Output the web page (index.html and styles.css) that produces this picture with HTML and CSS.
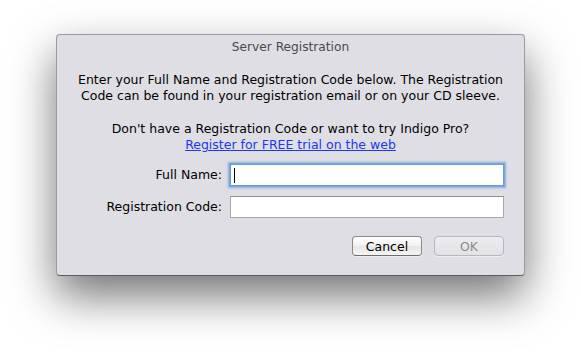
FILE: index.html
```html
<!DOCTYPE html>
<html>
<head>
<meta charset="utf-8">
<title>Server Registration</title>
<link rel="stylesheet" href="styles.css">
</head>
<body>
<div class="stage">
  <div class="sheet">
    <div class="title">Server Registration</div>
    <p class="message">Enter your Full Name and Registration Code below. The Registration Code can be found in your registration email or on your CD sleeve.</p>
    <p class="trial">Don't have a Registration Code or want to try Indigo Pro?<br><a href="#" class="link">Register for FREE trial on the web</a></p>
    <div class="form">
      <label class="label">Full Name:</label>
      <div class="field focused"><span class="caret"></span></div>
      <label class="label">Registration Code:</label>
      <div class="field"></div>
    </div>
    <div class="buttons">
      <button class="btn">Cancel</button>
      <button class="btn disabled">OK</button>
    </div>
  </div>
</div>
</body>
</html>
```

FILE: styles.css
```css
html, body {
  margin: 0;
  padding: 0;
  background: #ffffff;
}
body {
  width: 581px;
  height: 354px;
  overflow: hidden;
  font-family: "DejaVu Sans", "Liberation Sans", sans-serif;
  font-size: 12.5px;
  color: #000;
}
.stage {
  padding: 34px 0 0 56px;
}
.sheet {
  width: 467px;
  height: 240px;
  background: #dfdee5;
  border: 1px solid #9a9aa0;
  border-bottom-color: #5c5c60;
  border-radius: 4px;
  box-shadow: 0 20px 45px rgba(0, 0, 0, 0.55);
  display: flex;
  flex-direction: column;
}
.title {
  text-align: center;
  color: #4a4a4a;
  font-size: 12.2px;
  line-height: 16px;
  padding-top: 4px;
}
.message, .trial {
  margin: 0;
  text-align: center;
  line-height: 16px;
}
.message {
  margin-top: 17px;
  padding: 0 16px;
}
.trial {
  margin-top: 17px;
}
.link {
  color: #1b37f0;
  text-decoration: underline;
}
.form {
  margin-top: 11px;
  display: grid;
  grid-template-columns: 165px 274px;
  column-gap: 8px;
  row-gap: 10px;
  align-items: center;
}
.label {
  text-align: right;
  line-height: 16px;
}
.field {
  box-sizing: border-box;
  height: 22px;
  background: #fff;
  border: 1px solid #a9a9a9;
  border-top-color: #8e8e8e;
  display: flex;
  align-items: center;
  padding-left: 3px;
}
.field.focused {
  border-color: #6f9bd3;
  box-shadow: 0 0 0 1px #7aa5da, 0 0 2px 2px rgba(110, 160, 220, 0.75);
}
.caret {
  width: 1px;
  height: 15px;
  background: #000;
}
.buttons {
  margin-top: 18px;
  display: flex;
  justify-content: flex-end;
  gap: 12px;
  padding-right: 20px;
}
.btn {
  box-sizing: border-box;
  width: 70px;
  height: 20px;
  padding: 0;
  font-family: "DejaVu Sans", "Liberation Sans", sans-serif;
  font-size: 12.5px;
  color: #000;
  background: linear-gradient(#ffffff, #f1f1f1 50%, #e6e6e6 51%, #f4f4f4);
  border: 1px solid #8a8a8a;
  border-bottom-color: #6d6d6d;
  border-radius: 4px;
  box-shadow: 0 1px 0 rgba(255,255,255,0.5);
}
.btn.disabled {
  color: #8c8c8c;
  background: linear-gradient(#ececf0, #e2e2e6);
  border-color: #b8b8bc;
}
```
